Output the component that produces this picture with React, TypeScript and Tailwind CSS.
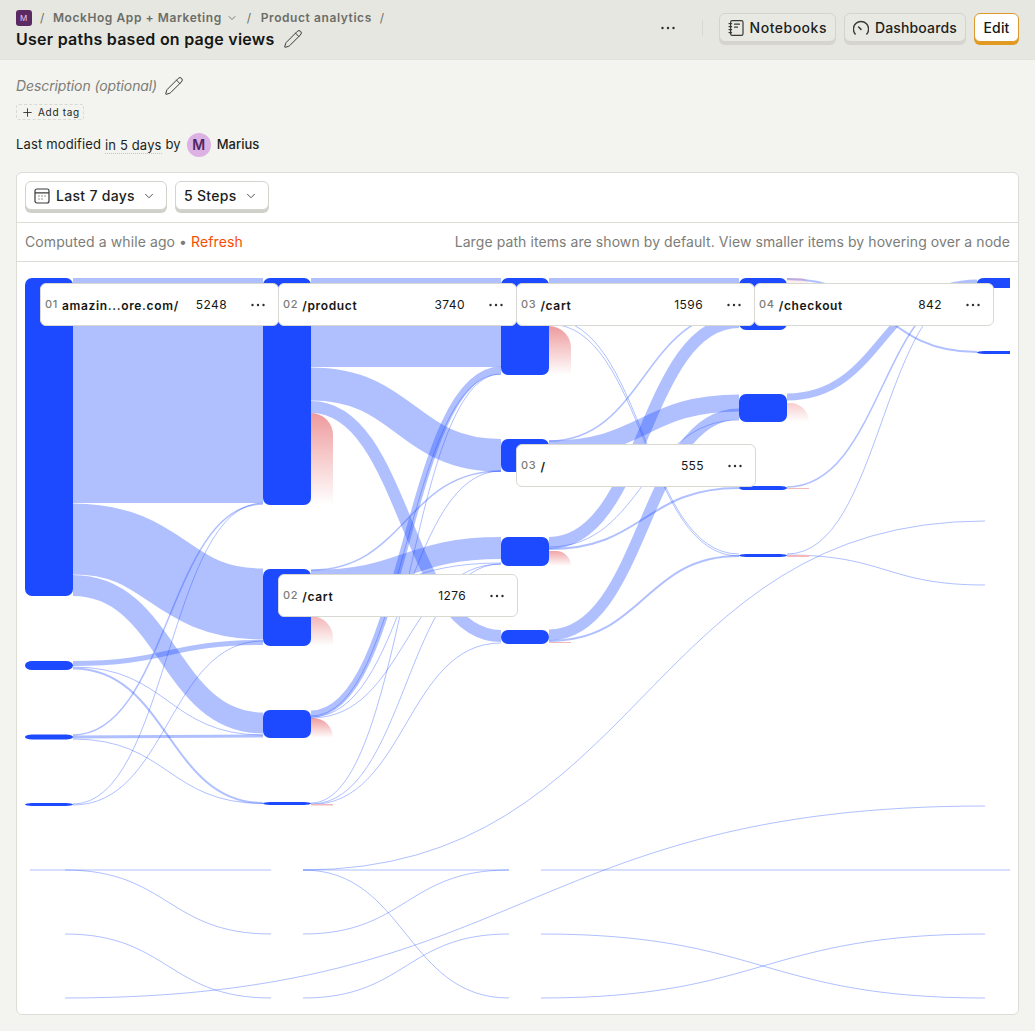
import { ChevronDown, Pencil, Plus } from "lucide-react";

type Link = [number, number, number, number, number];

const nodes: [number, number, number][] = [
  [25, 278, 318],
  [25, 661, 9],
  [25, 734.5, 5],
  [25, 803, 3],
  [263, 278, 227],
  [263, 569, 77],
  [263, 710, 28],
  [263, 802, 3],
  [501, 278, 97],
  [501, 439, 33],
  [501, 537, 29],
  [501, 630, 14],
  [739, 278, 52],
  [739, 394, 28],
  [739, 486, 4],
  [739, 554, 3],
  [977, 278, 10],
  [977, 351, 3],
];

const links: Link[] = [
  // step 1 -> 2
  [73, 390.5, 263, 390.5, 225],
  [73, 539, 263, 604, 71],
  [73, 585.5, 263, 723, 21],
  [73, 663.5, 263, 642.5, 5],
  [73, 667, 263, 735, 1],
  [73, 668.5, 263, 803, 2],
  [73, 735, 263, 504, 1.5],
  [73, 737, 263, 736, 3],
  [73, 739, 263, 803.5, 1],
  [73, 804, 263, 503, 1],
  [73, 805, 263, 641, 1],
  // step 2 -> 3
  [311, 322.5, 501, 322.5, 89],
  [311, 384, 501, 455.5, 33],
  [311, 407, 501, 636, 12],
  [311, 570, 501, 471, 1.5],
  [311, 581, 501, 548, 22],
  [311, 594, 501, 563, 1],
  [311, 714, 501, 370, 7],
  [311, 716, 501, 374, 1],
  [311, 717, 501, 471, 1],
  [311, 718, 501, 564, 1],
  [311, 803, 501, 374, 1],
  [311, 804, 501, 564, 1],
  [311, 804.5, 501, 643, 1],
  // step 3 -> 4
  [549, 283, 739, 283, 10],
  [549, 319, 739, 554, 1],
  [549, 324, 739, 556, 1],
  [549, 441, 739, 312, 1.5],
  [549, 449, 739, 403, 17],
  [549, 543, 739, 322, 12],
  [549, 547, 739, 420, 1],
  [549, 549, 739, 488, 2],
  [549, 635, 739, 414, 11],
  [549, 641, 739, 556, 2],
  // step 4 -> 5
  [787, 279, 977, 352, 2],
  [787, 397, 977, 283, 7],
  [787, 487, 977, 287, 1.5],
  [787, 554, 977, 288, 1],
  [787, 555, 985, 585, 1],
  // links left without a node
  [30, 870, 271, 870, 1],
  [65, 870, 271, 934, 1],
  [65, 934, 271, 998, 1],
  [65, 998, 985, 806, 1],
  [303, 870, 985, 521, 1],
  [303, 870, 509, 998, 1],
  [303, 870, 509, 870, 1],
  [303, 934, 509, 870, 1],
  [303, 998, 509, 934, 1],
  [541, 870, 1010, 870, 1],
  [541, 934, 985, 998, 1],
  [541, 998, 985, 934, 1],
];

const dropoffs: [number, number, number, number][] = [
  [311, 413, 92, 1],
  [311, 616, 30, 0.75],
  [311, 718, 20, 1],
  [549, 326, 49, 1],
  [549, 551, 15, 0.9],
  [787, 403, 19, 0.5],
  [787, 278, 8, 0.35],
];

const pinkLines: [number, number, number][] = [
  [311, 804, 1.5],
  [549, 642, 1],
  [787, 488, 1],
  [787, 555, 2],
];

const labels = [
  { step: "01", name: "amazin...ore.com/", count: 5248, x: "left-[15px]", y: "top-[5px]", w: "w-[239px]" },
  { step: "02", name: "/product", count: 3740, x: "left-[253px]", y: "top-[5px]", w: "w-[239px]" },
  { step: "03", name: "/cart", count: 1596, x: "left-[491px]", y: "top-[5px]", w: "w-[239px]" },
  { step: "04", name: "/checkout", count: 842, x: "left-[729px]", y: "top-[5px]", w: "w-[240px]" },
  { step: "03", name: "/", count: 555, x: "left-[491px]", y: "top-[166px]", w: "w-[240px]" },
  { step: "02", name: "/cart", count: 1276, x: "left-[253px]", y: "top-[296px]", w: "w-[240px]" },
];

const linkPath = ([x0, y0, x1, y1]: Link) => {
  const xm = (x0 + x1) / 2;
  return `M${x0} ${y0}C${xm} ${y0} ${xm} ${y1} ${x1} ${y1}`;
};

const Dots = () => (
  <svg width="16" height="4" viewBox="0 0 16 4" className="fill-[#2d2d2a]">
    <circle cx="2.5" cy="2" r="1.2" />
    <circle cx="8" cy="2" r="1.2" />
    <circle cx="13.5" cy="2" r="1.2" />
  </svg>
);

const GaugeIcon = () => (
  <svg width="16" height="18" viewBox="1 0 16 18" fill="none" stroke="#3a3a37" strokeWidth="1.5" strokeLinecap="round">
    <path d="M3.2 15A7.6 7.6 0 1 1 14.8 15" />
    <path d="M9 10.4 6.6 8" />
  </svg>
);

const NotebookIcon = () => (
  <svg width="16" height="18" viewBox="0 0 16 18" fill="none" stroke="#3a3a37" strokeWidth="1.2" strokeLinecap="round">
    <rect x="2.6" y="1.6" width="12.4" height="14.8" rx="1.6" />
    <path d="M1 4.6H3.6M1 7.6H3.6M1 10.6H3.6M1 13.6H3.6" />
    <path d="M6.5 5.2H11.5M6.5 8.2H9.5" />
  </svg>
);

const CalendarIcon = () => (
  <svg width="16" height="16" viewBox="0 0 16 16" fill="none" stroke="#3a3a37" strokeWidth="1.2" className="mr-[6px]">
    <rect x="1" y="1" width="14" height="14" rx="2" />
    <path d="M1 4.8H15" />
    <path d="M4.5 8H5.5M7.5 8H8.5M10.5 8H11.5M4.5 11H5.5M7.5 11H8.5" strokeWidth="1.1" />
  </svg>
);

const HeaderButton = ({ icon, label, tracking }: { icon: React.ReactNode; label: string; tracking: string }) => (
  <button className={`flex h-[29px] items-center gap-1.5 rounded-md border border-[#d3d4cd] bg-[#e8e9e3] px-2 text-sm font-[450] ${tracking} text-[#1d1f1c] shadow-[0_3px_0_#d6d4d0]`}>
    {icon}
    {label}
  </button>
);

const FilterButton = ({ label, icon }: { label: string; icon?: React.ReactNode }) => (
  <button className="flex h-[29px] items-center rounded-md border border-[#d3d4cd] bg-white pl-2 pr-2.5 text-sm font-[450] tracking-[0.3px] text-[#1d1f1c] shadow-[0_3px_0_#cfd0ca]">
    {icon}
    <span className="mr-[7px]">{label}</span>
    <ChevronDown className="h-3.5 w-3.5 text-[#3a3a37]" strokeWidth={1.5} />
  </button>
);

export default function App() {
  return (
    <div className="min-h-[1031px] bg-[#f3f4ef] font-['Inter',sans-serif] text-[#1d1f1c]">
      {/* Top bar */}
      <div className="flex h-[60px] items-start justify-between border-b border-[#e2e3dd] bg-[#e6e7e1] pl-4 pr-4">
        <div className="pt-2.5">
          <div className="flex h-4 items-center text-xs font-semibold tracking-[0.58px] text-[#6c6d68]">
            <span className="flex h-4 w-4 items-center justify-center rounded-[3px] bg-[#5b2a62] text-[8px] font-medium text-[#dcb1e3]">
              M
            </span>
            <span className="ml-2 mr-2 font-normal">/</span>
            MockHog App + Marketing
            <ChevronDown className="ml-1 h-3 w-3" strokeWidth={1.75} />
            <span className="ml-[9px] mr-[9px] font-normal">/</span>
            Product analytics
            <span className="ml-2 font-normal">/</span>
          </div>
          <div className="mt-px flex items-center gap-2 text-base font-semibold leading-6 tracking-[0.25px] text-[#151714]">
            User paths based on page views
            <Pencil className="h-5 w-5 text-[#3a3a37]" strokeWidth={1.2} />
          </div>
        </div>
        <div className="flex items-center pt-[13px]">
          <Dots />
          <span className="ml-[26px] mr-4 h-4 w-px bg-[#d8d9d3]" />
          <div className="flex gap-2">
            <HeaderButton icon={<NotebookIcon />} label="Notebooks" tracking="tracking-[0.5px]" />
            <HeaderButton icon={<GaugeIcon />} label="Dashboards" tracking="tracking-[0.15px]" />
            <button className="h-[29px] w-[45px] rounded-md border border-[#dc9a2e] bg-white text-sm font-[450] tracking-[0.2px] text-[#151714] shadow-[0_3px_0_#e29b20]">
              Edit
            </button>
          </div>
        </div>
      </div>

      {/* Meta */}
      <div className="px-4">
        <div className="mt-[15px] flex h-[22px] items-center gap-[7px] text-sm italic tracking-[-0.1px] text-[#7c7d78]">
          Description (optional)
          <Pencil className="h-5 w-5 text-[#3a3a37]" strokeWidth={1.2} />
        </div>
        <div className="mt-[7px] flex h-4 w-[68px] items-center gap-1 rounded-[3px] border border-dashed border-[#d8d9d3] pl-1 text-[10px] font-normal tracking-[0.7px]">
          <Plus className="h-[13px] w-[13px]" strokeWidth={1.5} />
          Add tag
        </div>
        <div className="mt-[13px] flex h-6 items-center text-[13px] tracking-[0.15px]">
          Last modified&nbsp;
          <span className="border-b border-dotted border-[#c5c6c0] leading-4">in 5 days</span>
          &nbsp;by
          <span className="ml-1.5 flex h-6 w-6 items-center justify-center rounded-full bg-[#dcb1e3] text-sm font-semibold text-[#4f2560]">
            M
          </span>
          <span className="ml-1.5 font-[450] tracking-normal">Marius</span>
        </div>
      </div>

      {/* Card */}
      <div className="mx-4 mt-[15px] h-[843px] overflow-hidden rounded-md border border-[#dcddd6] bg-white">
        <div className="flex h-[50px] items-start gap-2 border-b border-[#dcddd6] px-2 pt-2">
          <FilterButton label="Last 7 days" icon={<CalendarIcon />} />
          <FilterButton label="5 Steps" />
        </div>
        <div className="flex h-[39px] items-center justify-between border-b border-[#dcddd6] px-2 text-sm text-[#7c7d78]">
          <span className="flex items-center gap-1 tracking-[0.1px]">
            Computed a while ago
            <span>•</span>
            <span className="text-[#f54e00]">Refresh</span>
          </span>
          <span className="tracking-[0.08px]">Large path items are shown by default. View smaller items by hovering over a node</span>
        </div>
        <div className="px-2 pt-[16px]">
          <div className="relative h-[730px] w-[985px] overflow-hidden">
            <svg width="985" height="730" viewBox="25 278 985 730" fill="none" className="block">
              <defs>
                <linearGradient id="dropoff" x1="0" y1="0" x2="0" y2="1">
                  <stop offset="0" stopColor="#e0484c" stopOpacity="0.55" />
                  <stop offset="1" stopColor="#e0484c" stopOpacity="0" />
                </linearGradient>
              </defs>
              {links.map((link, i) => (
                <path key={i} d={linkPath(link)} stroke="#1d4aff" strokeOpacity={0.35} strokeWidth={link[4]} />
              ))}
              {dropoffs.map(([x, y, h, opacity], i) => {
                const r = Math.min(22, h);
                return (
                  <path
                    key={i}
                    d={`M${x} ${y}H${x + 22 - r}A${r} ${r} 0 0 1 ${x + 22} ${y + r}V${y + h}H${x}Z`}
                    fill="url(#dropoff)"
                    opacity={opacity}
                  />
                );
              })}
              {pinkLines.map(([x, y, h], i) => (
                <rect key={i} x={x} y={y} width="22" height={h} fill="#f4b8bb" />
              ))}
              {nodes.map(([x, y, h], i) => (
                <rect key={i} x={x} y={y} width="48" height={h} rx="7" fill="#1d4aff" />
              ))}
            </svg>
            {labels.map((label) => (
              <div
                key={`${label.step}${label.name}`}
                className={`absolute ${label.x} ${label.y} ${label.w} flex h-[43px] items-center rounded-md border border-[#d8d9d3] bg-white pl-[4px] pr-[12px]`}
              >
                <span className="mr-1 text-[11px] font-medium tracking-[0.7px] text-[#7c7d78]">{label.step}</span>
                <span className="mt-[2px] flex-1 text-xs font-semibold tracking-[0.65px] text-[#151714]">{label.name}</span>
                <span className="mr-[23px] text-xs tracking-[0.4px] text-[#151714]">{label.count}</span>
                <Dots />
              </div>
            ))}
          </div>
        </div>
      </div>
    </div>
  );
}
